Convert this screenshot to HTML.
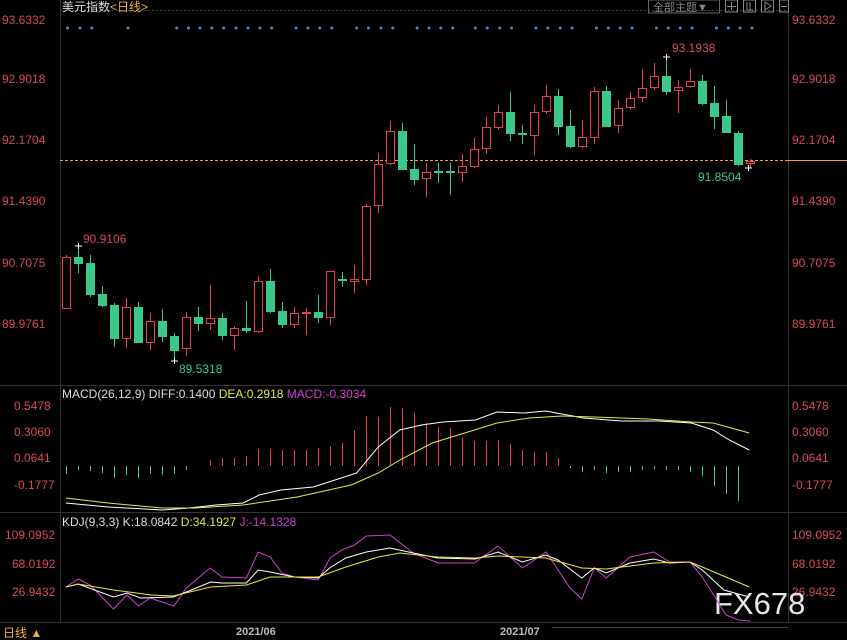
<!DOCTYPE html><html><head><meta charset="utf-8"><style>
body{margin:0;background:#000;width:847px;height:640px;overflow:hidden;font-family:"Liberation Sans","Noto Sans CJK SC",sans-serif}
svg{display:block}
</style></head><body>
<svg id="s" width="847" height="640" xmlns="http://www.w3.org/2000/svg" font-family="Liberation Sans, Noto Sans CJK SC, sans-serif">
<rect width="847" height="640" fill="#000"/>
<line x1="60.5" y1="0" x2="60.5" y2="622" stroke="#333"/>
<line x1="788.5" y1="0" x2="788.5" y2="622" stroke="#333"/>
<line x1="60" y1="10.5" x2="788" y2="10.5" stroke="#444" stroke-dasharray="2,2"/>
<line x1="0" y1="385.5" x2="847" y2="385.5" stroke="#333"/>
<line x1="0" y1="512.5" x2="847" y2="512.5" stroke="#333"/>
<line x1="0" y1="622.5" x2="847" y2="622.5" stroke="#333"/>
<line x1="60" y1="160.5" x2="788" y2="160.5" stroke="#f0a040" stroke-dasharray="3,2"/>
<line x1="788" y1="160.5" x2="847" y2="160.5" stroke="#f0a040"/>
<text x="62" y="11" fill="#ddd" font-size="12">美元指数<tspan fill="#f0b040">&lt;日线&gt;</tspan></text>
<rect x="648.5" y="0" width="71" height="13" fill="none" stroke="#666"/>
<text x="653" y="11" fill="#888" font-size="11">全部主题▼</text>
<g fill="none" stroke="#888">
<rect x="725.5" y="0" width="12" height="12"/><rect x="743.5" y="0" width="12" height="12"/><rect x="761.5" y="0" width="12" height="12"/><rect x="779.5" y="0" width="9" height="12"/>
<path d="M731.5 2v8M727 6.5h9M747 2v8h6M750 2v8M765 2v8l6-4zM781 6.5h6"/>
</g>
<g fill="#d94a5a" font-size="12">
<text x="2" y="24">93.6332</text><text x="2" y="83">92.9018</text><text x="2" y="144">92.1704</text><text x="2" y="205">91.4390</text><text x="2" y="267">90.7075</text><text x="2" y="328">89.9761</text>
<text x="792" y="24">93.6332</text><text x="792" y="83">92.9018</text><text x="792" y="144">92.1704</text><text x="792" y="205">91.4390</text><text x="792" y="267">90.7075</text><text x="792" y="328">89.9761</text>
<text x="14" y="410">0.5478</text><text x="14" y="436">0.3060</text><text x="14" y="462">0.0641</text><text x="14" y="489">-0.1777</text>
<text x="792" y="410">0.5478</text><text x="792" y="436">0.3060</text><text x="792" y="462">0.0641</text><text x="792" y="489">-0.1777</text>
<text x="5" y="539">109.0952</text><text x="12" y="568">68.0192</text><text x="12" y="596">26.9432</text>
<text x="792" y="539">109.0952</text><text x="792" y="568">68.0192</text><text x="792" y="596">26.9432</text>
<text x="83" y="243" font-size="12">90.9106</text><text x="672" y="52">93.1938</text>
</g>
<text x="179" y="373" fill="#3cc88a" font-size="12">89.5318</text>
<text x="698" y="181" fill="#3cc88a" font-size="12">91.8504</text>
<text x="62" y="398" font-size="12" fill="#ddd">MACD(26,12,9) DIFF:0.1400 <tspan fill="#e8e840">DEA:0.2918</tspan> <tspan fill="#d040d0">MACD:-0.3034</tspan></text>
<text x="62" y="526" font-size="12" fill="#ddd">KDJ(9,3,3) K:18.0842 <tspan fill="#e8e840">D:34.1927</tspan> <tspan fill="#d040d0">J:-14.1328</tspan></text>
<text x="236" y="635" fill="#bbb" font-size="11" font-weight="bold">2021/06</text>
<text x="500" y="635" fill="#bbb" font-size="11" font-weight="bold">2021/07</text>
<line x1="552" y1="627.5" x2="788" y2="627.5" stroke="#444"/>
<text x="3" y="637" fill="#f0b040" font-size="12">日线 ▲</text>
<text x="714" y="614" fill="#fff" font-size="31" opacity="0.9">FX678</text>
<g id="g"></g>
</svg>
<script>
var g=document.getElementById('g'),h='';
var R='#e8404e',G='#3cc88a';
// x, bodyTop, bodyBot, wickTop, wickBot, color, hollow
var c=[[66,257,308,255,309,R],[78,257,263,246,273,G],[90,263,294,255,297,G],[102,294,305,286,307,G],[114,305,338,303,347,G],[126,307,338,298,348,R],[138,307,342,302,342,G],[150,321,342,313,350,R],[162,321,336,309,342,G],[174,336,350,333,361,G],[186,317,348,312,356,R],[198,317,323,307,331,G],[210,318,323,285,330,R],[222,318,335,313,340,G],[234,328,335,326,350,R],[246,328,330,301,333,G],[258,281,331,276,333,R],[270,281,311,269,313,G],[282,311,324,302,328,G],[294,313,324,307,328,R],[306,312,313,308,335,R],[318,312,317,295,323,G],[330,271,317,271,325,R],[342,279,280,272,287,G],[354,279,281,265,293,R],[366,206,279,204,285,R],[378,164,205,153,213,R],[390,131,163,121,165,R],[402,131,169,123,170,G],[414,169,179,144,185,G],[426,172,178,163,197,R],[438,171,172,163,183,G],[450,171,172,163,195,G],[462,166,172,154,182,R],[474,149,166,138,168,R],[486,127,148,117,154,R],[498,112,127,105,130,R],[510,112,133,92,141,G],[522,133,134,125,144,G],[534,112,135,105,155,R],[546,96,111,85,114,R],[558,96,126,89,135,G],[570,126,146,110,148,G],[582,137,146,120,148,R],[594,91,137,87,144,R],[606,91,126,86,127,G],[618,108,125,100,133,R],[630,98,107,92,110,R],[642,88,97,69,102,R],[654,76,87,63,90,R],[666,76,91,57,95,G],[678,87,90,80,113,R],[690,81,86,69,88,R],[702,81,103,75,105,G],[714,103,116,86,129,G],[726,116,132,100,133,G],[738,133,164,131,166,G],[750,161,163,159,168,R]];
c.forEach(function(k){var x=k[0];h+='<line x1="'+(x+.5)+'" y1="'+k[3]+'" x2="'+(x+.5)+'" y2="'+k[4]+'" stroke="'+k[5]+'"/>';
var hgt=Math.max(1,k[2]-k[1]);
if(k[5]==R)h+='<rect x="'+(x-3.5)+'" y="'+(k[1]+.5)+'" width="8" height="'+hgt+'" fill="#000" stroke="'+R+'"/>';
else h+='<rect x="'+(x-4)+'" y="'+k[1]+'" width="9" height="'+(hgt+1)+'" fill="'+G+'"/>';});
h+='<path d="M75 246h7M78.5 243v6M663 57h7M666.5 54v6M171 361h7M174.5 358v6M745 168h7M748.5 165v6" stroke="#fff"/>';
// blue dots
[125,148,170,237,327,349,370,392,414,437,459,481,503,548,570,592,614,660,682,705,727,772,794,816,838,880,902,925,947,992,1014,1037,1059,1104,1126,1148,1170,1215,1237,1259,1281,1326,1348,1370,1392].forEach(function(z){h+='<circle cx="'+(z/1.851).toFixed(1)+'" cy="28" r="1.5" fill="#3a8fd0"/>';});
// macd hist
var m=[-8,-4,-5,-7,-12,-9,-12,-8,-9,-8,-4,0,6,8,8,10,17,17,16,16,16,18,20,23,36,50,49,59,58,53,43,39,38,28,25,25,26,22,16,14,14,8,-2,-6,-4,-7,-6,-6,-4,-3,-4,-4,-6,-10,-20,-28,-35];
m.forEach(function(v,i){var x=66+i*12+.5;h+='<line x1="'+x+'" y1="466" x2="'+x+'" y2="'+(466-v)+'" stroke="'+(v>0?R:G)+'"/>';});
function P(a,col,sc){var s=a.map(function(p){return ((sc?p[0]/1.851:p[0])).toFixed(1)+','+p[1]}).join(' ');h+='<polyline points="'+s+'" fill="none" stroke="'+col+'"/>';}
P([[122,503],[200,507],[300,510],[350,508],[400,505],[450,503],[480,495],[520,490],[580,487],[620,480],[660,473],[700,447],[740,430],[780,425],[820,422],[880,420],[920,412],[970,413],[1010,411],[1050,415],[1080,418],[1150,421],[1220,421],[1280,423],[1320,430],[1350,440],[1387,450]],'#fff',1);
P([[122,498],[200,503],[300,508],[360,508],[450,505],[550,497],[650,485],[700,473],[740,460],[800,443],[860,433],[920,423],[980,418],[1040,416],[1100,417],[1200,419],[1280,422],[1320,423],[1387,433]],'#e8e840',1);
P([[122,587],[145,579],[167,585],[210,609],[235,595],[256,606],[278,598],[322,606],[345,588],[389,568],[411,577],[456,578],[478,552],[500,557],[522,573],[545,577],[589,580],[611,558],[633,550],[656,545],[678,536],[722,535],[765,553],[811,563],[878,563],[922,546],[967,568],[1011,552],[1055,588],[1077,599],[1100,568],[1122,578],[1166,557],[1210,552],[1240,562],[1277,562],[1300,577],[1344,615],[1367,620],[1389,621]],'#d040d0',1);
P([[122,587],[145,584],[210,597],[235,593],[260,598],[320,597],[345,592],[390,582],[411,583],[456,583],[478,570],[500,572],[545,577],[589,578],[610,568],[640,558],[678,552],[722,548],[765,553],[810,558],[880,559],[922,552],[967,562],[1010,555],[1033,560],[1077,578],[1100,568],[1122,573],[1166,563],[1210,559],[1240,563],[1277,562],[1300,570],[1340,590],[1387,597]],'#fff',1);
P([[122,587],[145,584],[210,590],[280,595],[320,596],[390,587],[456,585],[500,577],[589,577],[640,567],[700,557],[740,553],[810,557],[880,558],[922,556],[1010,558],[1077,568],[1122,569],[1210,563],[1277,562],[1300,567],[1387,587]],'#e8e840',1);
g.innerHTML=h;
</script>
</body></html>
